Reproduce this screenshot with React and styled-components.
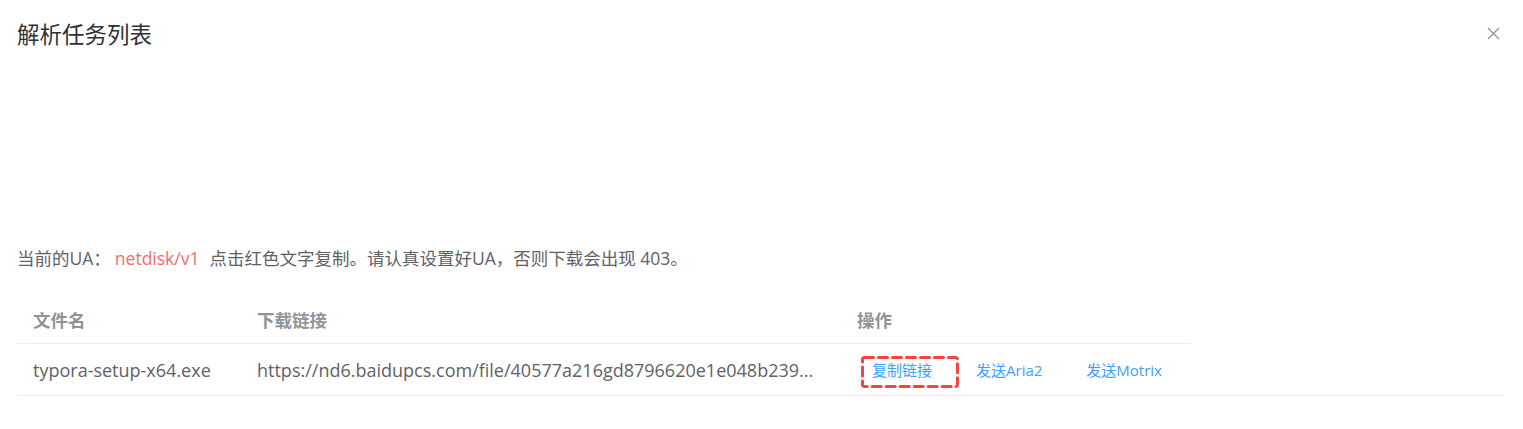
import React from "react";
import styled, { createGlobalStyle } from "styled-components";

const GlobalStyle = createGlobalStyle`
  html, body { margin: 0; padding: 0; background: #fff; }
  body {
    font-family: "Open Sans", "Noto Sans CJK SC", sans-serif;
    -webkit-font-smoothing: antialiased;
  }
  * { box-sizing: border-box; }
`;

const Dialog = styled.div`
  width: 1523px;
  min-height: 429px;
  background: #fff;
`;

const Header = styled.div`
  display: flex;
  align-items: center;
  justify-content: space-between;
  padding: 20px 22px 0 17px;
`;

const Title = styled.h2`
  margin: 0;
  font-size: 22.5px;
  line-height: 30px;
  font-weight: 400;
  color: #303133;
`;

const CloseButton = styled.button`
  display: flex;
  align-items: center;
  justify-content: center;
  width: 16px;
  height: 16px;
  padding: 0;
  margin-top: -4px;
  border: none;
  background: transparent;
  color: #909399;
  cursor: pointer;
`;

const Body = styled.div`
  padding: 196px 20px 0 17px;
`;

const UaLine = styled.p`
  margin: 0;
  font-size: 17.5px;
  line-height: 24px;
  color: #606266;
  white-space: nowrap;
`;

const UaValue = styled.span`
  color: #f56c6c;
  padding: 0 10px 0 4px;
  cursor: pointer;
`;

const Table = styled.div`
  margin-top: 26px;
  display: flex;
  flex-direction: column;
`;

const columns = "224px 600px 350px";

const HeadRow = styled.div`
  display: grid;
  grid-template-columns: ${columns};
  width: max-content;
  height: 48px;
  border-bottom: 1px solid #ebeef5;
`;

const BodyRow = styled.div`
  display: grid;
  grid-template-columns: ${columns};
  width: 100%;
  height: 52px;
  border-bottom: 1px solid #ebeef5;
`;

const HeadCell = styled.div`
  display: flex;
  align-items: center;
  padding: 0 16px;
  font-size: 17.5px;
  font-weight: 700;
  color: #909399;
`;

const Cell = styled.div`
  display: flex;
  align-items: center;
  padding: ${(p) => (p.$flush ? "0 0 0 16px" : "0 16px")};
  font-size: 18px;
  color: #606266;
  min-width: 0;
`;

const Ellipsis = styled.span`
  display: block;
  white-space: nowrap;
  overflow: hidden;
  text-overflow: ellipsis;
`;

const Actions = styled.div`
  display: flex;
  align-items: center;
  gap: 14px;
`;

const LinkButton = styled.button`
  position: relative;
  height: 30px;
  padding: 0 15px;
  border: none;
  background: transparent;
  font-family: inherit;
  font-size: 15px;
  color: #409eff;
  cursor: pointer;
  white-space: nowrap;
`;

const DashedMark = styled.svg`
  position: absolute;
  left: 4px;
  top: 1px;
  width: 98px;
  height: 32px;
  overflow: visible;
  pointer-events: none;
`;

export default function App() {
  return (
    <>
      <GlobalStyle />
      <Dialog>
        <Header>
          <Title>解析任务列表</Title>
          <CloseButton aria-label="关闭">
            <svg width="13" height="13" viewBox="0 0 13 13">
              <path d="M1 1 L12 12 M12 1 L1 12" stroke="currentColor" strokeWidth="1.3" fill="none" />
            </svg>
          </CloseButton>
        </Header>
        <Body>
          <UaLine>
            当前的UA：<UaValue>netdisk/v1</UaValue>点击红色文字复制。请认真设置好UA，否则下载会出现 403。
          </UaLine>
          <Table>
            <HeadRow>
              <HeadCell>文件名</HeadCell>
              <HeadCell>下载链接</HeadCell>
              <HeadCell>操作</HeadCell>
            </HeadRow>
            <BodyRow>
              <Cell>
                <Ellipsis>typora-setup-x64.exe</Ellipsis>
              </Cell>
              <Cell>
                <Ellipsis>https://nd6.baidupcs.com/file/40577a216gd8796620e1e048b239...</Ellipsis>
              </Cell>
              <Cell $flush>
                <Actions>
                  <LinkButton>
                    复制链接
                    <DashedMark viewBox="0 0 98 32">
                      <rect
                        x="1.5"
                        y="1.5"
                        width="95"
                        height="29"
                        rx="2"
                        fill="none"
                        stroke="#f5433f"
                        strokeWidth="3"
                        strokeDasharray="9 5"
                        strokeLinecap="round"
                      />
                    </DashedMark>
                  </LinkButton>
                  <LinkButton>发送Aria2</LinkButton>
                  <LinkButton>发送Motrix</LinkButton>
                </Actions>
              </Cell>
            </BodyRow>
          </Table>
        </Body>
      </Dialog>
    </>
  );
}
